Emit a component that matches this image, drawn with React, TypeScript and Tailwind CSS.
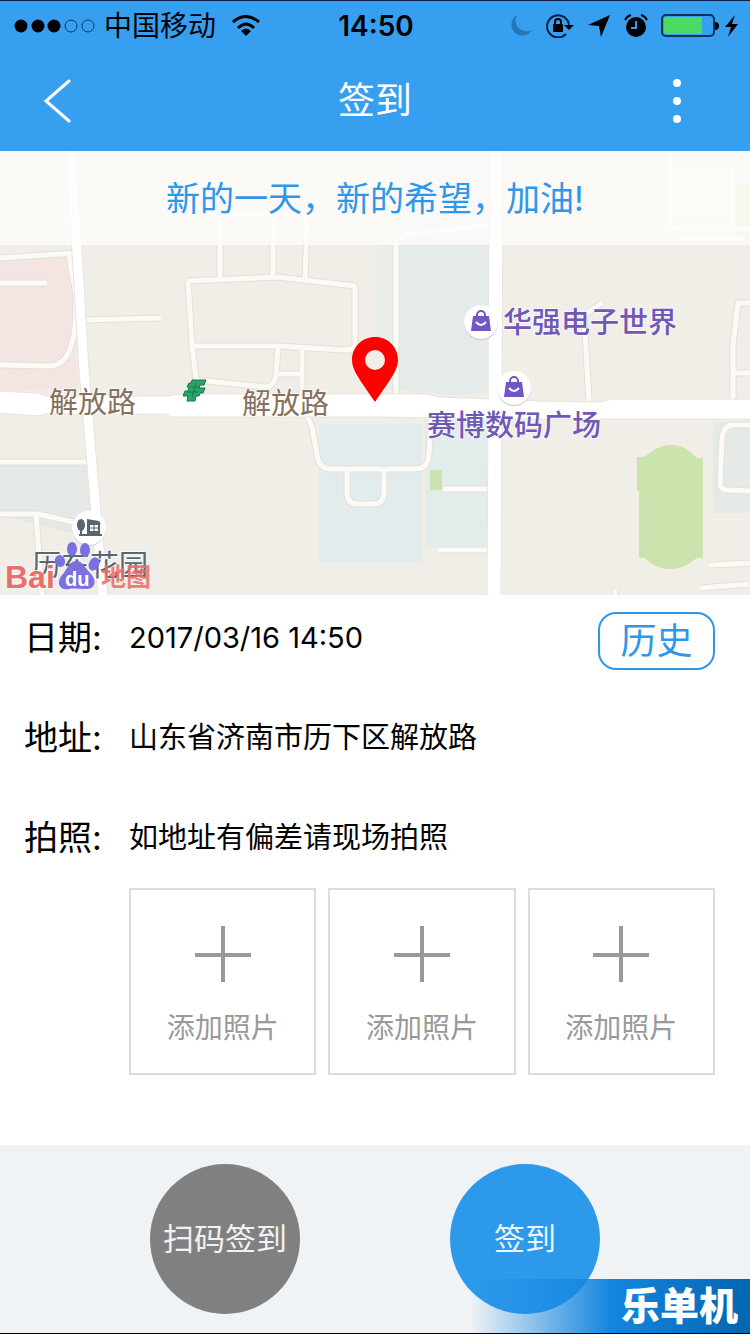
import React from "react";

const photoSlots = [1, 2, 3];

// areas drawn beneath the roads
const areas = [
  { d: "M0 259 L70 255 L78 388 L0 392 Z", fill: "#f4e5e3" },
  { d: "M0 464 L90 461 L97 530 L70 533 L0 515 Z", fill: "#e5e9e5" },
  { d: "M392 151 H490 V393 L455 395 L392 390 Z", fill: "#e4ebe8" },
  { d: "M378 151 H394 V390 H378 Z", fill: "#eaede8" },
  { d: "M319 424 H422 V563 H319 Z", fill: "#e2ecec" },
  { d: "M425 420 H487 V547 H425 Z", fill: "#e2ecea" },
  { d: "M713 422 H750 V513 H713 Z", fill: "#e5eae7" },
  { d: "M736 184 H750 V240 H736 Z", fill: "#cbe3ac" },
  { d: "M430 470 H442 V490 H430 Z", fill: "#cbe3ac" },
  {
    d: "M637 457 H643 C650 455 655 445 671 445 C687 445 692 455 697 458 H703 V558 H697 C691 562 684 569 671 569 C657 569 650 563 645 558 H639 V491 H637 Z",
    fill: "#cbe3ac",
  },
];

const smallRoads = [
  "M0 258 L75 253",
  "M0 283 H47",
  "M69 256 L76 295 Q78 365 50 366 L0 365",
  "M83 320 L161 318",
  "M220 279 V222 Q220 214 230 214 H298 Q307 214 307 226 L305 279",
  "M273 277 V216",
  "M188 281 L277 277 L355 286 V345 Q355 350 345 350 L278 346 H194",
  "M188 281 L192 345 L196 380 L266 387 Q274 387 276 375 L278 346",
  "M302 350 V405 L312 427 L317 455 Q319 469 332 469 L415 469 Q428 469 429 455 L431 420",
  "M279 374 H302",
  "M347 469 V492 Q347 504 357 504 H374 Q384 504 384 492 V469",
  "M396 395 V245 Q396 236 408 234 L490 225",
  "M443 489 H489",
  "M438 550 H489",
  "M602 303 L584 315 L589 401",
  "M750 303 H738 L733 345 V418",
  "M733 373 H750",
  "M750 425 H732 Q724 425 722 438 L720 483 Q720 489 726 490 L750 491",
  "M670 151 V224 Q670 229 677 229 H750",
  "M732 167 V229",
  "M682 239 H744",
  "M709 565 L750 563",
  "M700 588 L750 584",
  "M615 590 V597",
  "M0 462 H90",
  "M0 514 H38 L86 525",
  "M36 514 L42 597",
];

const fieldLines = [174, 182, 190, 198, 206, 214];

const BagPin = ({ x, y }: { x: number; y: number }) => (
  <g transform={`translate(${x} ${y})`}>
    <circle cy="1" r="17" fill="#c9c5bf" />
    <circle r="17" fill="#fff" />
    <path d="M-8 -6 H8 L10 9 H-10 Z" fill="#7256c3" />
    <path
      d="M-4 -5 V-7 A4 4 0 0 1 4 -7 V-5"
      fill="none"
      stroke="#7256c3"
      strokeWidth="2"
    />
    <path d="M-5 0 Q0 6 5 0" fill="none" stroke="#fff" strokeWidth="2" />
  </g>
);

const BaiduLogo = () => (
  <g>
    <text
      x="5"
      y="588"
      fontSize="32"
      fontWeight="700"
      fill="#e96e6c"
      fontFamily="Liberation Sans, sans-serif"
      stroke="#fff"
      strokeWidth="2"
      strokeOpacity="0.7"
      paintOrder="stroke"
    >
      Bai
    </text>
    <text
      x="101"
      y="586"
      fontSize="25"
      fontWeight="700"
      fill="#e96e6c"
      fillOpacity="0.9"
    >
      地图
    </text>
    <g fill="#7b70e2">
      <ellipse cx="72" cy="549" rx="5" ry="7" />
      <ellipse cx="85" cy="550" rx="5" ry="7" />
      <ellipse cx="60" cy="561" rx="5" ry="6" transform="rotate(-15 60 561)" />
      <ellipse cx="94" cy="564" rx="5" ry="7" transform="rotate(25 94 564)" />
      <path d="M76 561 C83 561 85 568 90 573 C98 581 95 589 86 589 C80 589 74 588 69 589 C59 591 56 582 62 575 C67 570 69 561 76 561 Z" />
    </g>
    <text
      x="65"
      y="586"
      fontSize="20"
      fontWeight="700"
      fill="#fff"
      fontFamily="Liberation Sans, sans-serif"
    >
      du
    </text>
  </g>
);

const MapView: React.FC = () => (
  <svg
    viewBox="0 151 750 444"
    preserveAspectRatio="xMidYMid slice"
    className="block w-full h-full"
  >
    <rect y="151" width="750" height="444" fill="#f1eee8" />
    {areas.map((area) => (
      <path key={area.d} d={area.d} fill={area.fill} />
    ))}

    <g fill="none" strokeLinejoin="round">
      {smallRoads.map((d) => (
        <path key={d} d={d} stroke="#e3e0d9" strokeWidth="7" />
      ))}
      {smallRoads.map((d) => (
        <path key={d} d={d} stroke="#fbfaf6" strokeWidth="5" />
      ))}
      {fieldLines.map((y) => (
        <path key={y} d={`M673 ${y} H729`} stroke="#fbfaf6" strokeWidth="2" />
      ))}
      <path d="M496 151 L495 420 L494 597" stroke="#e8e4dc" strokeWidth="15" />
      <path d="M71 151 L84 370 L103 597" stroke="#e8e4dc" strokeWidth="11" />
    </g>
    <path
      d="M-2 391 L38 393 L45 396 H168 L180 394 H425 L440 397 L540 401 L600 402 L612 399 H752 V419 H500 L380 417 H172 L165 414 H45 L38 416 L-2 413 Z"
      fill="#fff"
      stroke="#e8e4dc"
      strokeWidth="1"
    />
    <g fill="none" stroke="#fff">
      <path d="M496 151 L495 420 L494 597" strokeWidth="13" />
      <path d="M71 151 L84 370 L103 597" strokeWidth="9" />
    </g>

    {/* bank */}
    <path
      d="M192 380 H206 L204 385 H200 L199 388 H205 L203 393 H200 L199 396 H196 L195 401 H187 L188 396 H183 L185 391 H188 L189 387 H187 L189 383 H191 Z"
      fill="#2ba36a"
      stroke="#117a48"
      strokeWidth="1"
    />
    <path
      d="M188 392 H198 M191 387 H199 M196 383 L192 397"
      stroke="#117a48"
      strokeWidth="1"
      fill="none"
    />

    <BagPin x={481} y={322} />
    <BagPin x={514} y={388} />

    {/* residential */}
    <circle cx="89" cy="529" r="17" fill="#d2cfca" />
    <circle cx="89" cy="528" r="17" fill="#fff" />
    <g fill="#56676f">
      <ellipse cx="81" cy="525" rx="4" ry="6" />
      <path d="M80 529 H82 V534 H80 Z M87 519 L99 521 L101 524 H100 V534 H102 V536 H79 V534 H87 Z" />
    </g>
    <path d="M90 525 H98 V531 H90 Z" fill="#fff" />
    <path d="M94 524 V532 M89 528 H99" stroke="#56676f" strokeWidth="1" />

    <g
      stroke="#fff"
      strokeWidth="2"
      strokeOpacity="0.6"
      paintOrder="stroke"
      fontSize="29"
    >
      <text x="49" y="413" fill="#87705d">
        解放路
      </text>
      <text x="242" y="414" fill="#87705d">
        解放路
      </text>
      <text x="503" y="333" fill="#7057b8" fontWeight="500">
        华强电子世界
      </text>
      <text x="427" y="436" fill="#7057b8" fontWeight="500">
        赛博数码广场
      </text>
      <text x="32" y="576" fill="#56676f">
        历东花园
      </text>
    </g>

    <BaiduLogo />

    {/* current position */}
    <path
      d="M375 337 C388 337 398 347 398 360 C398 370 390 380 375 402 C360 380 352 370 352 360 C352 347 362 337 375 337 Z"
      fill="#f00"
    />
    <circle cx="375" cy="360" r="10" fill="#f1eee8" />
  </svg>
);

const StatusBar: React.FC = () => (
  <div className="h-[50px] grid grid-cols-[1fr_auto_1fr] items-center pl-[14px] pr-3 text-black">
    <div className="flex items-center">
      <svg width="82" height="14" viewBox="0 0 82 14">
        <circle cx="7" cy="7" r="6.5" />
        <circle cx="24" cy="7" r="6.5" />
        <circle cx="40" cy="7" r="6.5" />
        <circle cx="57" cy="7" r="6" fill="none" stroke="#06386b" />
        <circle cx="74" cy="7" r="6" fill="none" stroke="#06386b" />
      </svg>
      <span className="ml-2 text-[28px] leading-10">中国移动</span>
      <svg className="ml-4" width="28" height="22" viewBox="0 0 28 22">
        <g fill="none" stroke="#000" strokeWidth="3">
          <path d="M1 7 Q14 -4 27 7" />
          <path d="M6 13 Q14 5 22 13" />
        </g>
        <path d="M9 16 Q14 11 19 16 L14 21 Z" />
      </svg>
    </div>
    <span className="text-[28px] leading-10 font-semibold">14:50</span>
    <div className="flex items-center justify-end">
      <svg width="22" height="22" viewBox="0 0 22 22">
        <path
          d="M7 0 A11 11 0 1 0 22 15 A11 11 0 0 1 7 0 Z"
          fill="#2477b4"
        />
      </svg>
      <svg className="ml-[14px]" width="28" height="24" viewBox="0 0 28 24">
        <path
          d="M20 20 A11 11 0 1 1 23 11"
          fill="none"
          stroke="#04203c"
          strokeWidth="2"
        />
        <path d="M18 11 H28 L23 16 Z" />
        <rect x="7" y="10" width="10" height="8" rx="1" />
        <path
          d="M9 11 V8 A3 3 0 0 1 15 8 V11"
          fill="none"
          stroke="#000"
          strokeWidth="2"
        />
      </svg>
      <svg className="ml-[14px]" width="22" height="22" viewBox="0 0 22 22">
        <path d="M22 0 L13 22 L11 11 L0 10 Z" />
      </svg>
      <svg className="ml-[14px]" width="24" height="24" viewBox="0 0 24 24">
        <circle cx="12" cy="13" r="10" />
        <path
          d="M1 6 Q3 2 7 1 M17 1 Q21 2 23 6"
          fill="none"
          stroke="#000"
          strokeWidth="2"
        />
        <path
          d="M12 7 V14 H7"
          fill="none"
          stroke="#379ff0"
          strokeWidth="2"
        />
      </svg>
      <svg className="ml-[13px]" width="58" height="24" viewBox="0 0 58 24">
        <rect
          x="1"
          y="1"
          width="52"
          height="21"
          rx="4"
          fill="none"
          stroke="#0a3357"
          strokeWidth="2"
        />
        <rect x="3" y="3" width="38" height="17" rx="1" fill="#4cd964" />
        <path d="M54 8 Q58 8 58 12 Q58 16 54 16 Z" />
      </svg>
      <svg className="ml-[6px]" width="13" height="22" viewBox="0 0 13 22">
        <path d="M10 0 L0 12 H6 L3 22 L13 9 H7 Z" />
      </svg>
    </div>
  </div>
);

const App: React.FC = () => {
  return (
    <div className="min-h-screen flex flex-col bg-white text-black font-['Inter','Noto_Sans_CJK_SC',sans-serif]">
      <header className="bg-[#379ff0] border-t border-[#0d1c4a]">
        <StatusBar />
        <div className="h-[100px] grid grid-cols-[1fr_auto_1fr] items-center px-10 text-white">
          <button type="button" aria-label="返回" className="justify-self-start">
            <svg width="32" height="44" viewBox="0 0 32 44">
              <path
                d="M29 2 L6 22 L29 42"
                fill="none"
                stroke="currentColor"
                strokeWidth="3"
                strokeLinecap="round"
              />
            </svg>
          </button>
          <h1 className="text-[37px] leading-[54px]">签到</h1>
          <button type="button" aria-label="更多" className="justify-self-end">
            <svg width="66" height="44" viewBox="0 0 66 44" fill="currentColor">
              <circle cx="33" cy="4" r="4" />
              <circle cx="33" cy="22" r="4" />
              <circle cx="33" cy="40" r="4" />
            </svg>
          </button>
        </div>
      </header>

      <section className="relative h-[444px]">
        <MapView />
        <p className="absolute inset-x-0 top-0 h-[94px] flex items-center justify-center bg-[#fffdfb]/80 text-[34px] text-[#2e97ea]">
          新的一天，新的希望，加油!
        </p>
      </section>

      <main className="flex-1 pt-[17px] pl-6 pr-[35px] pb-[69px]">
        <div className="min-h-[100px] flex items-start leading-[52px]">
          <span className="w-[105px] shrink-0 text-[34px]">日期:</span>
          <span className="flex-1 text-[29px]">2017/03/16 14:50</span>
          <button
            type="button"
            className="w-[117px] h-[58px] rounded-[18px] border-2 border-[#2e97ea] text-[36px] leading-[54px] text-[#2e97ea]"
          >
            历史
          </button>
        </div>
        <div className="min-h-[100px] flex items-start leading-[52px]">
          <span className="w-[105px] shrink-0 text-[34px]">地址:</span>
          <span className="flex-1 text-[29px]">山东省济南市历下区解放路</span>
        </div>
        <div className="min-h-[76px] flex items-start leading-[52px]">
          <span className="w-[105px] shrink-0 text-[34px]">拍照:</span>
          <span className="flex-1 text-[29px]">如地址有偏差请现场拍照</span>
        </div>
        <div className="grid grid-cols-3 gap-3 ml-[105px]">
          {photoSlots.map((slot) => (
            <button
              key={slot}
              type="button"
              className="aspect-square flex flex-col items-center justify-start pt-9 border-2 border-[#dcdcdc] text-[#999]"
            >
              <svg width="56" height="56" viewBox="0 0 56 56">
                <path
                  d="M28 0 V56 M0 29 H56"
                  stroke="currentColor"
                  strokeWidth="4"
                />
              </svg>
              <span className="mt-[26px] text-[28px] leading-10">添加照片</span>
            </button>
          ))}
        </div>
      </main>

      <footer className="relative flex justify-evenly pt-[19px] pb-[19px] bg-[#f0f3f6] border-b border-black">
        <button
          type="button"
          className="size-[150px] rounded-full bg-[#808080] text-white/90 text-[31px]"
        >
          扫码签到
        </button>
        <button
          type="button"
          className="size-[150px] rounded-full bg-[#2d99ea] text-white/90 text-[31px]"
        >
          签到
        </button>
        <div className="absolute right-0 bottom-0 w-[280px] h-[54px] pr-3 flex items-center justify-end bg-linear-to-r from-[#1b8ee8]/0 via-[#1486e0] to-[#0366b0] text-white text-[39px] font-black">
          乐单机
        </div>
      </footer>
    </div>
  );
};

export default App;
